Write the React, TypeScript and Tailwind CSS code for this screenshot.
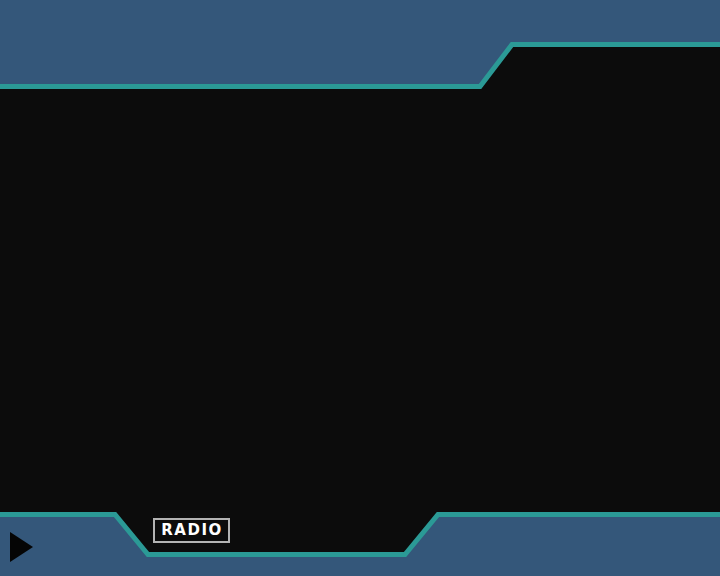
import React from "react";

export default function App() {
  return (
    <div className="w-[720px] h-[576px] bg-[#0c0c0c] flex flex-col overflow-hidden" style={{ fontFamily: '"DejaVu Sans", Verdana, sans-serif' }}>
      <svg width="720" height="90" viewBox="0 0 720 90" className="block shrink-0">
        <polygon points="0,0 720,0 720,44 512,44 480,86 0,86" fill="#34577a" />
        <polyline points="0,86.5 480,86.5 512,44.5 720,44.5" fill="none" stroke="#2b9a96" strokeWidth="5" />
      </svg>
      <div className="flex-1" />
      <div className="relative h-[76px] shrink-0">
        <svg width="720" height="76" viewBox="0 0 720 76" className="block">
          <polygon points="0,14 115,14 148,54 405,54 438,14 720,14 720,76 0,76" fill="#34577a" />
          <polyline points="0,14.5 115,14.5 148,54.5 405,54.5 438,14.5 720,14.5" fill="none" stroke="#2b9a96" strokeWidth="5" />
        </svg>
        <div className="absolute left-[153px] top-[18px] w-[77px] h-[25px] border-2 border-[#b4b4b4] bg-[#0c0c0c] flex items-center justify-center text-white font-bold text-[15px] leading-none tracking-[1.5px] pl-[1px]">
          RADIO
        </div>
        <button className="absolute left-[0px] top-[30px] w-[43px] h-[34px] flex items-center justify-center">
          <svg width="23" height="30" viewBox="0 0 23 30">
            <polygon points="0,0 23,15 0,30" fill="#050505" />
          </svg>
        </button>
      </div>
    </div>
  );
}
